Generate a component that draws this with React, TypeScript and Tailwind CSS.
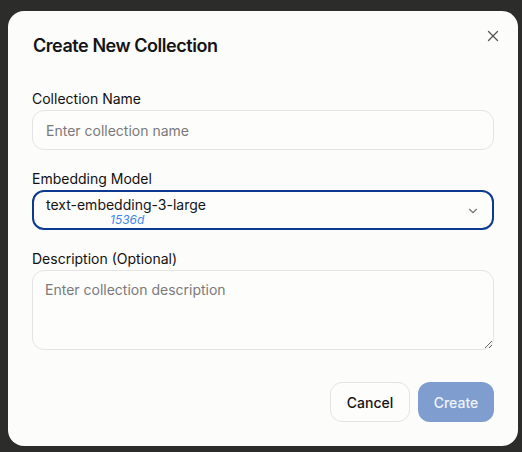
import { X, ChevronDown } from "lucide-react";

export default function App() {
  return (
    <div
      className="w-[522px] h-[452px] bg-[#2c2c2a] pl-[8px] pr-[4px] pt-[11px] overflow-hidden"
      style={{ fontFamily: "Inter, 'Noto Sans', sans-serif" }}
    >
      <div className="relative w-[510px] h-[435px] rounded-[16px] bg-[#fcfcfb] px-6 pt-[21px] pb-6 flex flex-col">
        <button className="absolute right-[14px] top-[14px] text-[#555] p-0.5">
          <X size={18} strokeWidth={1.7} />
        </button>
        <h2 className="text-[18px] leading-[28px] font-semibold tracking-tight text-[#141414] pl-px">
          Create New Collection
        </h2>

        <div className="mt-[29px] flex flex-col gap-[1px]">
          <label className="text-[14px] leading-[20px] font-normal text-[#111]">Collection Name</label>
          <input
            className="h-[40px] rounded-[12px] border border-[#e4e4e2] bg-[#fdfdfc] px-[13px] text-[14px] text-[#141414] placeholder:text-[#7a7a7a] outline-none"
            placeholder="Enter collection name"
          />
        </div>

        <div className="mt-[19px] flex flex-col gap-[1px]">
          <label className="text-[14px] leading-[20px] font-normal text-[#111]">Embedding Model</label>
          <div className="h-[40px] rounded-[12px] border-2 border-[#0b3a91] bg-[#fdfdfc] pl-[12px] pr-[12px] flex items-center justify-between">
            <div className="flex flex-col pt-[2px]">
              <span className="text-[14px] leading-[17px] text-[#141414]">text-embedding-3-large</span>
              <span className="text-[12px] leading-[14px] italic text-[#3f85ee] pl-[64px]">1536d</span>
            </div>
            <ChevronDown size={14} className="text-[#777] mt-[1px]" />
          </div>
        </div>

        <div className="mt-[19px] flex flex-col gap-[1px]">
          <label className="text-[14px] leading-[20px] font-normal text-[#111]">Description (Optional)</label>
          <textarea
            className="h-[80px] rounded-[12px] border border-[#e4e4e2] bg-[#fdfdfc] px-[12px] py-[9px] text-[14px] leading-[20px] text-[#141414] placeholder:text-[#7a7a7a] outline-none resize-y"
            placeholder="Enter collection description"
          />
        </div>

        <div className="mt-auto flex justify-end gap-2">
          <button className="h-[40px] w-[80px] rounded-[12px] border border-[#e4e4e2] bg-[#fdfdfc] text-[14px] font-medium text-[#141414]">
            Cancel
          </button>
          <button className="h-[40px] w-[76px] rounded-[12px] bg-[#7f9ecf] text-[14px] font-medium text-[#eef2f9]">
            Create
          </button>
        </div>
      </div>
    </div>
  );
}
